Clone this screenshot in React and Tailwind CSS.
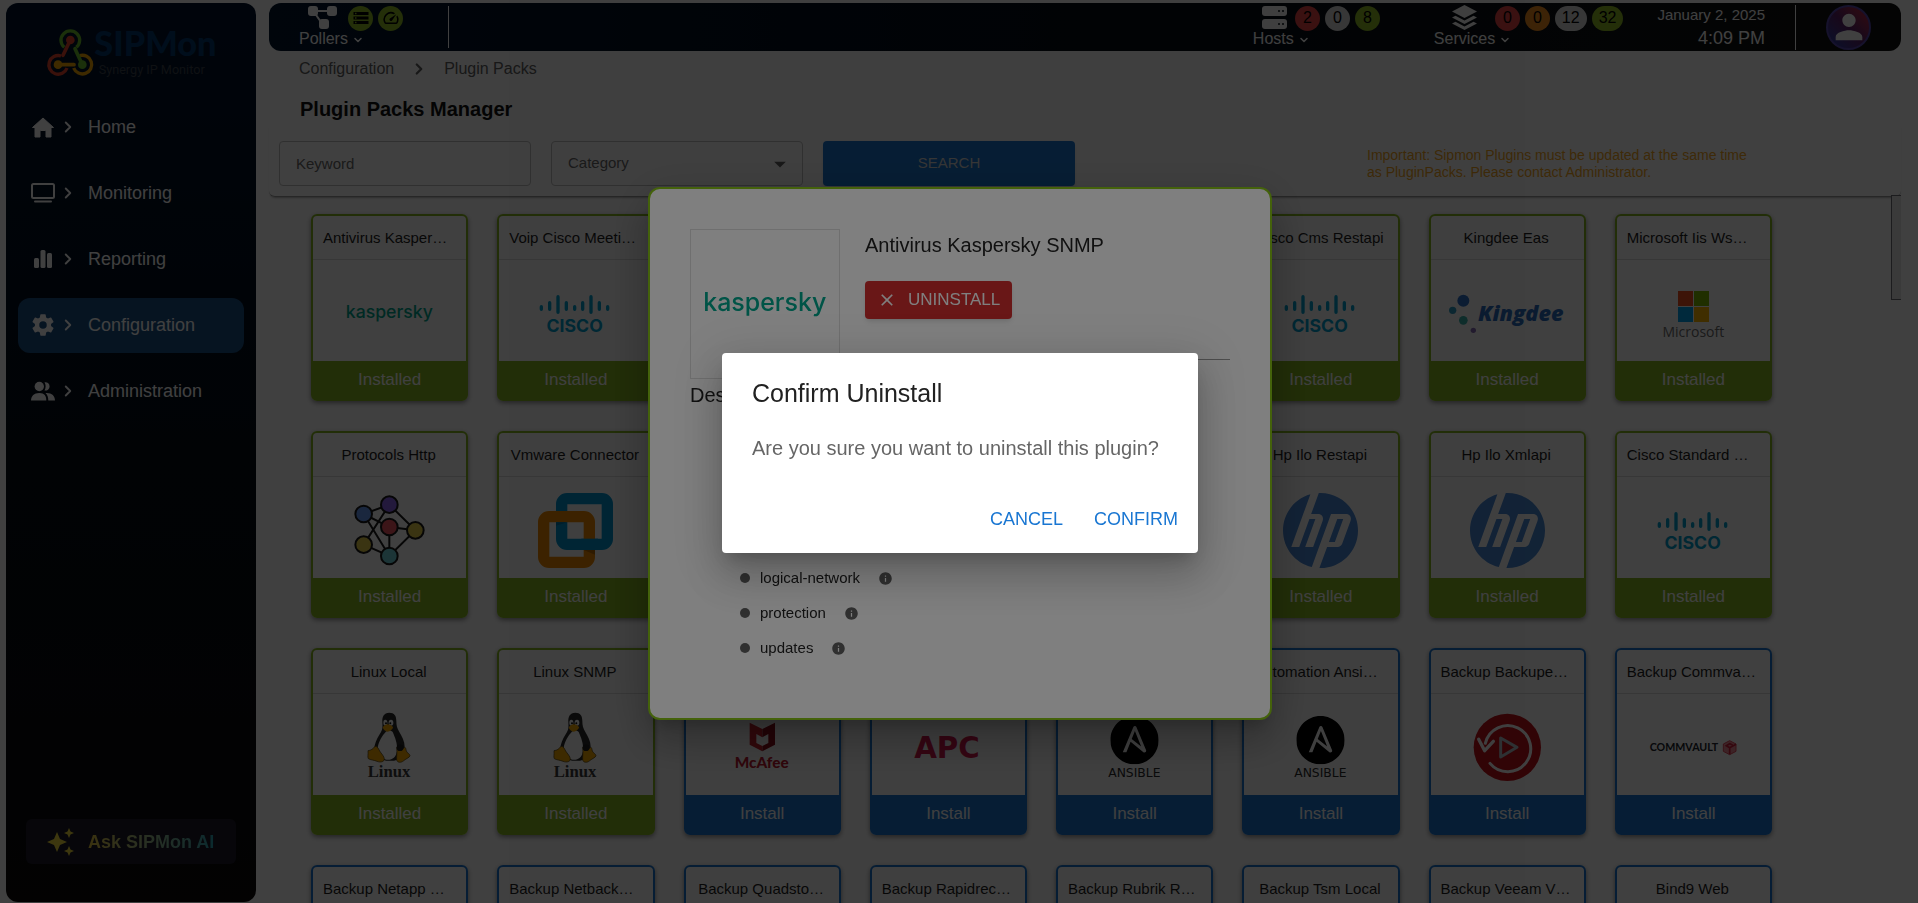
import { useState } from 'react';
import { SiAnsible, SiHp } from 'react-icons/si';
import {
  MdArrowDropDown,
  MdClose,
  MdInfo,
  MdPerson,
  MdSpeed,
  MdStorage,
} from 'react-icons/md';
import { IoSettingsSharp } from 'react-icons/io5';
import { ChevronDown, ChevronRight } from 'lucide-react';

/* ---------- Vendor logos ---------- */

function LogoFrame({ children, className = 'size-[75px]' }) {
  return (
    <svg
      viewBox="0 0 225 225"
      className={`overflow-visible ${className}`}
      aria-hidden="true"
    >
      {children}
    </svg>
  );
}

function Kaspersky({ className }) {
  return (
    <LogoFrame className={className}>
      <text
        x="112"
        y="127"
        textAnchor="middle"
        fontSize="53"
        fontWeight="500"
        fill="#00a88e"
        fontFamily="Inter, sans-serif"
      >
        kaspersky
      </text>
    </LogoFrame>
  );
}

function Cisco() {
  return (
    <LogoFrame>
      <path
        d="M10 92v8M35 80v20M60 62v47M85 80v20M110 92v8M134 80v20M159 62v47M184 80v20M209 92v8"
        stroke="#00a0d0"
        strokeWidth="10"
        strokeLinecap="round"
      />
      <text
        x="110"
        y="167"
        textAnchor="middle"
        fontSize="53"
        fontWeight="700"
        fill="#00a0d0"
        fontFamily="Inter, sans-serif"
      >
        CISCO
      </text>
    </LogoFrame>
  );
}

function Kingdee() {
  return (
    <LogoFrame>
      <circle cx="-20" cy="74" r="18" fill="#2f73c8" />
      <circle cx="-52" cy="103" r="11" fill="#2f9ec4" />
      <circle cx="-20" cy="133" r="13" fill="#3ab4ac" />
      <circle cx="10" cy="163" r="8" fill="#8a6fb8" />
      <text
        x="24"
        y="134"
        fontSize="65"
        fontWeight="800"
        fontStyle="italic"
        fill="#2b6cc0"
        fontFamily="'Open Sans', sans-serif"
      >
        Kingdee
      </text>
    </LogoFrame>
  );
}

function Microsoft() {
  return (
    <LogoFrame>
      <rect x="66" y="45" width="45" height="45" fill="#f25022" />
      <rect x="114" y="45" width="45" height="45" fill="#7fba00" />
      <rect x="66" y="93" width="45" height="45" fill="#00a4ef" />
      <rect x="114" y="93" width="45" height="45" fill="#ffb900" />
      <text
        x="112"
        y="182"
        textAnchor="middle"
        fontSize="42"
        fill="#6b6b6b"
        fontFamily="'Open Sans', sans-serif"
      >
        Microsoft
      </text>
    </LogoFrame>
  );
}

function HttpNodes() {
  return (
    <LogoFrame>
      <g stroke="#1a1a1a" strokeWidth="6" fill="none">
        <path d="M35 63 112 35 190 112 112 189 35 63 112 102 190 112M112 102V189L35 155 112 35" />
        <circle cx="35" cy="63" r="25" fill="#6a9cf5" />
        <circle cx="112" cy="35" r="25" fill="#8a66f0" />
        <circle cx="190" cy="112" r="25" fill="#e8cf4a" />
        <circle cx="112" cy="102" r="25" fill="#ee5560" />
        <circle cx="35" cy="155" r="25" fill="#e8cf4a" />
        <circle cx="112" cy="189" r="25" fill="#6fd3dc" />
      </g>
    </LogoFrame>
  );
}

function Vmware() {
  return (
    <LogoFrame>
      <rect
        x="71"
        y="17"
        width="137"
        height="137"
        rx="16"
        fill="none"
        stroke="#0095d3"
        strokeWidth="34"
      />
      <rect
        x="17"
        y="71"
        width="137"
        height="137"
        rx="16"
        fill="none"
        stroke="#f38b00"
        strokeWidth="34"
      />
      <path d="M130 137h50v34h-50z" fill="#0095d3" />
      <path d="M137 171h34v14z" fill="#b86a00" />
      <path d="M54 88h34l-34 10z" fill="#0078ac" />
    </LogoFrame>
  );
}

function Hp() {
  return (
    <LogoFrame>
      <SiHp size={225} color="#4a8ad8" />
    </LogoFrame>
  );
}

function Tux() {
  return (
    <LogoFrame>
      <path
        d="M112 8c-17 0-22 13-21 28 1 17 1 24-8 37-10 15-15 30-17 45l6 22 30 12h24l26-8 6-34c0-16-8-30-16-44-7-12-9-19-9-33 0-16-6-25-21-25z"
        fill="#2b2b2b"
      />
      <path
        d="M101 66c-10 10-22 30-24 48-1 14 6 22 14 29 6 5 12 7 22 6 14-2 20-12 22-25 2-24-6-42-13-58-6-6-15-6-21 0z"
        fill="#ffffff"
      />
      <ellipse cx="100" cy="38" rx="6" ry="9" fill="#ffffff" />
      <ellipse cx="117" cy="38" rx="7" ry="9" fill="#ffffff" />
      <circle cx="102" cy="40" r="3" fill="#111111" />
      <circle cx="115" cy="40" r="3" fill="#111111" />
      <path
        d="M92 52c5-5 9-9 15-9 7 0 12 4 16 8 1 6-10 14-16 14-7 0-13-6-15-13z"
        fill="#f5a800"
      />
      <path
        d="M48 122c9-1 15-5 21-13 7 0 10 6 14 14 5 8 14 16 14 24 0 9-12 11-22 7-9-4-20-4-26-8-3-5 0-12-1-24z"
        fill="#f5a800"
        stroke="#4a3a10"
        strokeWidth="2"
      />
      <path
        d="M134 112c5 10 16 10 24 0 3 0 4 6 5 11 2 6 10 8 11 14-1 6-14 10-20 16-7 6-18 5-20-3-1-10 2-20 0-38z"
        fill="#f5a800"
        stroke="#4a3a10"
        strokeWidth="2"
      />
      <circle cx="144" cy="113" r="10" fill="#1c1c1c" />
      <text
        x="111"
        y="202"
        textAnchor="middle"
        fontSize="50"
        fontWeight="700"
        fill="#383838"
        fontFamily="'Liberation Serif', serif"
      >
        Linux
      </text>
    </LogoFrame>
  );
}

function McAfee() {
  return (
    <LogoFrame>
      <path d="M74 38 112 57v25L94 72v27l18 9v16l-38-20z" fill="#c8202c" />
      <path d="M150 38 112 57v25l18-10v27l-18 9v16l38-20z" fill="#8e0c1a" />
      <text
        x="110"
        y="173"
        textAnchor="middle"
        fontSize="46"
        fontWeight="900"
        fill="#c01830"
        fontFamily="Lato, sans-serif"
      >
        McAfee
      </text>
    </LogoFrame>
  );
}

function Apc() {
  return (
    <LogoFrame>
      <text
        x="108"
        y="143"
        textAnchor="middle"
        fontSize="88"
        fontWeight="900"
        fill="#d4164c"
        fontFamily="'DejaVu Sans', sans-serif"
      >
        APC
      </text>
    </LogoFrame>
  );
}

function Ansible() {
  return (
    <LogoFrame>
      <SiAnsible x={40} y={18} size={145} color="#000000" />
      <text
        x="112"
        y="201"
        textAnchor="middle"
        fontSize="37"
        fill="#2b2b2b"
        fontFamily="'DejaVu Sans', sans-serif"
      >
        ANSIBLE
      </text>
    </LogoFrame>
  );
}

function BackupExec() {
  return (
    <LogoFrame>
      <circle cx="112" cy="112" r="101" fill="#c41018" />
      <path
        d="M46 100A69 69 0 1 1 60 160"
        fill="none"
        stroke="#ffffff"
        strokeWidth="9"
        strokeLinecap="round"
      />
      <path
        d="m26 88 18 34 26-28"
        fill="none"
        stroke="#ffffff"
        strokeWidth="10"
        strokeLinecap="round"
        strokeLinejoin="round"
      />
      <path
        d="M92 84v57l49-29z"
        fill="none"
        stroke="#b8c4cc"
        strokeWidth="9"
        strokeLinejoin="round"
      />
    </LogoFrame>
  );
}

function Commvault() {
  return (
    <LogoFrame>
      <text
        x="84"
        y="124"
        textAnchor="middle"
        fontSize="32"
        fontWeight="700"
        fill="#20242c"
        fontFamily="Lato, sans-serif"
      >
        COMMVAULT
      </text>
      <path
        d="m221 92 19 10v22l-19 10-19-10v-22z"
        fill="#f08a96"
        stroke="#e04a5c"
        strokeWidth="3"
      />
      <path
        d="m221 113 19-10M221 113v20M221 113l-10-6 10-6 9 4"
        fill="none"
        stroke="#d0203c"
        strokeWidth="5"
      />
    </LogoFrame>
  );
}

/* ---------- Data ---------- */

const plugins = [
  { name: 'Antivirus Kaspersky SNMP', Logo: Kaspersky, installed: true },
  { name: 'Voip Cisco Meeting Restapi', Logo: Cisco, installed: true },
  { name: 'Cisco Meraki', Logo: Cisco, installed: true },
  { name: 'Cisco Ise Restapi', Logo: Cisco, installed: true },
  { name: 'Cisco Esa Xmlapi', Logo: Cisco, installed: true },
  { name: 'Cisco Cms Restapi', Logo: Cisco, installed: true },
  { name: 'Kingdee Eas', Logo: Kingdee, installed: true },
  { name: 'Microsoft Iis Wsman', Logo: Microsoft, installed: true },
  { name: 'Protocols Http', Logo: HttpNodes, installed: true },
  { name: 'Vmware Connector', Logo: Vmware, installed: true },
  { name: 'Vmware Vcenter', Logo: Vmware, installed: true },
  { name: 'Hp Proliant', Logo: Hp, installed: true },
  { name: 'Hp Msa', Logo: Hp, installed: true },
  { name: 'Hp Ilo Restapi', Logo: Hp, installed: true },
  { name: 'Hp Ilo Xmlapi', Logo: Hp, installed: true },
  { name: 'Cisco Standard SNMP', Logo: Cisco, installed: true },
  { name: 'Linux Local', Logo: Tux, installed: true },
  { name: 'Linux SNMP', Logo: Tux, installed: true },
  { name: 'Antivirus Mcafee', Logo: McAfee, installed: false },
  { name: 'Apc Ups', Logo: Apc, installed: false },
  { name: 'Ansible Cli', Logo: Ansible, installed: false },
  { name: 'Automation Ansible Tower', Logo: Ansible, installed: false },
  { name: 'Backup Backupexec', Logo: BackupExec, installed: false },
  { name: 'Backup Commvault Commserve', Logo: Commvault, installed: false },
  { name: 'Backup Netapp Snapmanager', installed: false },
  { name: 'Backup Netbackup Nscp', installed: false },
  { name: 'Backup Quadsto…', installed: false },
  { name: 'Backup Rapidrecovery', installed: false },
  { name: 'Backup Rubrik Restapi', installed: false },
  { name: 'Backup Tsm Local', installed: false },
  { name: 'Backup Veeam Vbem', installed: false },
  { name: 'Bind9 Web', installed: false },
];

const menu = [
  { label: 'Home', Icon: HomeIcon },
  { label: 'Monitoring', Icon: MonitorIcon },
  { label: 'Reporting', Icon: BarsIcon },
  { label: 'Configuration', Icon: IoSettingsSharp, active: true },
  { label: 'Administration', Icon: PeopleIcon },
];

const discoveryRules = [
  'devices',
  'events',
  'logical-network',
  'protection',
  'updates',
];

/* ---------- Icons ---------- */

function HomeIcon({ className }) {
  return (
    <svg
      viewBox="0 0 24 24"
      className={className}
      fill="currentColor"
      stroke="currentColor"
      strokeLinejoin="round"
      aria-hidden="true"
    >
      <path d="m12 3 10.500 9.500H20V22h-5v-5.500a1 1 0 0 0-1-1h-4a1 1 0 0 0-1 1V22H4v-9.500H1.500z" />
    </svg>
  );
}

function PeopleIcon({ className }) {
  return (
    <svg
      viewBox="0 0 24 24"
      className={className}
      fill="currentColor"
      aria-hidden="true"
    >
      <circle cx="8.300" cy="7.500" r="4.700" />
      <path d="M0 21.500c0-4.500 3-7.500 8.300-7.500s7 3 7 7.500z" />
      <path d="M13.500 3.300a4.200 4.200 0 1 1 0 8.200c1.500-2.500 1.500-5.700 0-8.200z" />
      <path d="M14.500 14c6-.5 9.500 2.500 9.500 7.500h-6.700c0-3.200-.8-5.700-2.800-7.500z" />
    </svg>
  );
}

function MonitorIcon({ className }) {
  return (
    <svg viewBox="0 0 24 24" className={className} aria-hidden="true">
      <rect
        x="1"
        y="3"
        width="22"
        height="14"
        rx="1.5"
        fill="none"
        stroke="currentColor"
        strokeWidth="2"
      />
      <path
        d="M4 20.500h16"
        stroke="currentColor"
        strokeWidth="2"
        strokeLinecap="round"
      />
    </svg>
  );
}

function BarsIcon({ className }) {
  return (
    <svg
      viewBox="0 0 24 24"
      className={className}
      fill="currentColor"
      aria-hidden="true"
    >
      <rect x="3" y="11" width="5" height="10" rx="1.5" />
      <rect x="9.500" y="3" width="5" height="18" rx="1.5" />
      <rect x="16" y="6" width="5" height="15" rx="1.5" />
    </svg>
  );
}

function PollerIcon() {
  return (
    <svg viewBox="0 0 30 24" className="h-6 w-[30px]" aria-hidden="true">
      <path
        d="M8 5h14M6 6l9 13"
        stroke="currentColor"
        strokeWidth="2"
        fill="none"
      />
      <rect width="10" height="10" rx="3" fill="currentColor" />
      <rect x="19" width="10" height="10" rx="3" fill="currentColor" />
      <rect x="11" y="13" width="10" height="10" rx="3" fill="currentColor" />
    </svg>
  );
}

function ServerIcon() {
  return (
    <svg viewBox="0 0 25 24" className="h-6 w-[25px]" aria-hidden="true">
      <rect y="0" width="25" height="10" rx="3" fill="currentColor" />
      <rect y="13" width="25" height="10" rx="3" fill="currentColor" />
      <g fill="#0a1018">
        <circle cx="17" cy="5" r="1" />
        <circle cx="21" cy="5" r="1" />
        <circle cx="17" cy="18" r="1" />
        <circle cx="21" cy="18" r="1" />
      </g>
    </svg>
  );
}

function LayersIcon() {
  return (
    <svg
      viewBox="0 0 25 26"
      className="h-[26px] w-[25px]"
      fill="currentColor"
      aria-hidden="true"
    >
      <path d="m12.500 0 12.500 6.500-12.500 6.500L0 6.500z" />
      <path d="m0 12.500 3.500-1.800 9 4.700 9-4.700 3.500 1.800-12.500 6.500z" />
      <path d="m0 18.500 3.500-1.800 9 4.700 9-4.700 3.500 1.800L12.500 25z" />
    </svg>
  );
}

function SparkleIcon() {
  return (
    <svg
      viewBox="0 0 27 28"
      className="h-7 w-[27px]"
      fill="#f4dc3c"
      aria-hidden="true"
    >
      <path d="m10 4 3 7 7 3-7 3-3 7-3-7-7-3 7-3z" />
      <path d="m22 0 1.500 3.500L27 5l-3.500 1.500L22 10l-1.500-3.500L17 5l3.500-1.500z" />
      <path d="m22 18 1.500 3.500L27 23l-3.500 1.500L22 28l-1.500-3.500L17 23l3.500-1.500z" />
    </svg>
  );
}

function SipmonLogo() {
  return (
    <svg
      viewBox="0 0 510 150"
      className="h-[50px] w-[170px] overflow-visible"
      role="img"
    >
      <g fill="none" strokeWidth="10">
        <path d="M52 58A28 28 0 1 1 88 58" stroke="#6cbf2c" />
        <path d="M42 84A28 28 0 1 0 60 120" stroke="#e8452c" />
        <path d="M80 120A28 28 0 1 0 98 83" stroke="#f5a800" />
      </g>
      <g strokeWidth="11" strokeLinecap="round">
        <path d="M70 36 48 82" stroke="#e8452c" />
        <path d="M106 110 84 62" stroke="#6cbf2c" />
        <path d="M33 110h48" stroke="#f5a800" />
      </g>
      <circle cx="70" cy="36" r="13" fill="#e8452c" />
      <circle cx="106" cy="110" r="13" fill="#6cbf2c" />
      <circle cx="33" cy="110" r="13" fill="#f5a800" />
      <text
        x="142"
        y="83"
        fontSize="103"
        fontWeight="900"
        fill="#003a70"
        fontFamily="Lato, sans-serif"
      >
        SIPMon
      </text>
      <text
        x="155"
        y="137"
        fontSize="38"
        fill="#3c444e"
        fontFamily="Roboto, sans-serif"
      >
        Synergy IP Monitor
      </text>
    </svg>
  );
}

/* ---------- Layout ---------- */

function Sidebar() {
  return (
    <aside className="mt-[3px] mb-px ml-[6px] flex w-[250px] shrink-0 flex-col rounded-xl bg-linear-to-b from-[#00132e] via-[#040c16] to-[#0c0a0a] text-white">
      <div className="pt-[25px] pl-[41px]">
        <SipmonLogo />
      </div>
      <nav className="mt-[22px] flex flex-col gap-[11px] px-3">
        {menu.map(({ label, Icon, active }) => (
          <a
            key={label}
            href="#"
            className={`flex h-[55px] items-center rounded-xl pb-px pl-[13px] text-lg ${
              active ? 'bg-[#1b5084]' : ''
            }`}
          >
            <Icon className="size-6" />
            <ChevronRight className="ml-1 size-[18px]" strokeWidth={2.5} />
            <span className="ml-[11px]">{label}</span>
          </a>
        ))}
      </nav>
      <button
        type="button"
        className="mx-5 mt-auto mb-[38px] flex h-[45px] items-center gap-[14px] rounded-md bg-[#1c1a2a] pl-[21px] text-lg font-bold"
      >
        <SparkleIcon />
        <span className="bg-linear-to-r from-[#e8c83c] to-[#28a8b8] bg-clip-text text-transparent">
          Ask SIPMon AI
        </span>
      </button>
    </aside>
  );
}

function Badge({ className, children }) {
  return (
    <span
      className={`flex h-[25px] min-w-[25px] items-center justify-center rounded-full text-base text-black ${className}`}
    >
      {children}
    </span>
  );
}

function StatusGroup({ label, icon, iconClass = 'gap-2 pl-[9px]', children }) {
  return (
    <div className="flex flex-col pb-[2px]">
      <div className={`flex h-[25px] items-center ${iconClass}`}>
        {icon}
        <div className="flex gap-[5px]">{children}</div>
      </div>
      <button
        type="button"
        className="flex items-center gap-1 text-base leading-4"
      >
        {label}
        <ChevronDown className="mt-[2px] size-3" strokeWidth={3} />
      </button>
    </div>
  );
}

function TopBar() {
  return (
    <header className="flex h-12 shrink-0 items-center rounded-xl bg-linear-to-r from-[#00142e] via-[#040c16] to-[#121212] pl-[30px] text-white">
      <StatusGroup
        label="Pollers"
        icon={<PollerIcon />}
        iconClass="gap-[10px] pl-[9px]"
      >
        <Badge className="bg-[#90bc26]">
          <MdStorage className="size-[18px]" />
        </Badge>
        <Badge className="bg-[#90bc26]">
          <MdSpeed className="size-[18px]" />
        </Badge>
      </StatusGroup>
      <div className="ml-[45px] h-[42px] w-px bg-white" />

      <div className="ml-auto flex items-center gap-[54px]">
        <StatusGroup label="Hosts" icon={<ServerIcon />}>
          <Badge className="bg-[#e84545]">2</Badge>
          <Badge className="bg-[#dcdcdc]">0</Badge>
          <Badge className="bg-[#90bc26]">8</Badge>
        </StatusGroup>
        <StatusGroup
          label="Services"
          icon={<LayersIcon />}
          iconClass="gap-[18px] pl-[18px]"
        >
          <Badge className="bg-[#e84545]">0</Badge>
          <Badge className="bg-[#f08c1e]">0</Badge>
          <Badge className="bg-[#dcdcdc] px-[7px]">12</Badge>
          <Badge className="bg-[#90bc26] px-[7px]">32</Badge>
        </StatusGroup>
      </div>
      <div className="ml-[34px] text-right">
        <p className="text-[15px] leading-[22px]">January 2, 2025</p>
        <p className="text-lg leading-6">4:09 PM</p>
      </div>
      <div className="ml-[30px] h-[45px] w-px bg-white" />
      <button
        type="button"
        aria-label="Profile"
        className="mx-[30px] flex size-[45px] items-center justify-center rounded-full border-2 border-[#5848b0] bg-linear-to-bl from-[#d01c34] via-[#5c2068] to-[#1040b0]"
      >
        <MdPerson className="size-10" />
      </button>
    </header>
  );
}

function Filters() {
  return (
    <form
      className="flex justify-between rounded-b-md border-b border-[#9a9a9a] pt-4 pb-[10px] pl-[10px] shadow-[0_2px_2px_-1px_rgba(0,0,0,0.3)]"
      onSubmit={(e) => e.preventDefault()}
    >
      <div className="flex gap-5">
        <input
          type="text"
          aria-label="Keyword"
          placeholder="Keyword"
          className="h-[45px] w-[252px] rounded border border-[#c0c0c0] px-4 text-[15px] placeholder:text-[#6a6a6a]"
        />
        <div className="relative">
          <select
            aria-label="Category"
            className="h-[45px] w-[252px] appearance-none rounded border border-[#c0c0c0] px-4 text-[15px] text-[#6a6a6a]"
          >
            <option>Category</option>
          </select>
          <MdArrowDropDown className="pointer-events-none absolute top-[9px] right-[9px] size-7 text-[#606060]" />
        </div>
        <button
          type="submit"
          className="h-[45px] w-[252px] rounded bg-[#1976d2] text-[15px] text-[#d8d8d8] uppercase shadow-md"
        >
          Search
        </button>
      </div>
      <p className="mt-[6px] mr-[154px] w-[380px] text-sm leading-[17px] text-[#f5a623]">
        Important: Sipmon Plugins must be updated at the same time as
        PluginPacks. Please contact Administrator.
      </p>
    </form>
  );
}

function PluginCard({ name, Logo, installed }) {
  return (
    <article
      className={`flex min-w-0 flex-col rounded-md border-2 shadow-[0_2px_5px_rgba(0,0,0,0.45)] ${
        installed ? 'border-[#88b820]' : 'border-[#1976d2]'
      }`}
    >
      <h2 className="truncate border-b border-[#dcdcdc] pr-3 pl-[10px] text-center text-[15px] leading-[43px] text-[#1e1e1e]">
        {name}
      </h2>
      <div className="flex h-[101px] justify-center pt-4">
        {Logo && <Logo />}
      </div>
      <button
        type="button"
        className={`h-[38px] text-[17px] text-white ${
          installed ? 'bg-[#88b820]' : 'bg-[#1976d2]'
        }`}
      >
        {installed ? 'Installed' : 'Install'}
      </button>
    </article>
  );
}

function PluginDetails() {
  return (
    <section
      role="dialog"
      aria-label="Antivirus Kaspersky SNMP"
      className="w-[624px] rounded-xl border-2 border-[#88c417] bg-white px-10 pt-10 pb-[52px] text-[#222222] shadow-[0_11px_15px_-7px_rgba(0,0,0,0.2),0_24px_38px_3px_rgba(0,0,0,0.14),0_9px_46px_8px_rgba(0,0,0,0.12)]"
    >
      <div className="flex gap-[25px]">
        <div className="flex size-[150px] items-center justify-center border border-[#dedede]">
          <Kaspersky className="size-[106px]" />
        </div>
        <div className="flex-1">
          <h2 className="text-xl leading-8">Antivirus Kaspersky SNMP</h2>
          <button
            type="button"
            className="mt-5 flex h-[38px] items-center gap-[11px] rounded bg-[#d32f2f] px-3 text-[17px] text-white uppercase shadow-md"
          >
            <MdClose className="size-5" />
            Uninstall
          </button>
          <hr className="mt-10 border-[#9a9a9a]" />
        </div>
      </div>
      <h3 className="text-xl leading-8">Description</h3>
      <div className="pl-[50px]">
        <p className="mt-4 text-[15px] leading-6">Monitor Kaspersky.</p>
        <h4 className="mt-3 text-base leading-7">Discovery rules</h4>
        <ul className="text-[15px]">
          {discoveryRules.map((rule) => (
            <li key={rule} className="flex h-[35px] items-center">
              <span className="size-[10px] rounded-full bg-[#606060]" />
              <span className="ml-[10px]">{rule}</span>
              <MdInfo className="ml-[18px] size-[15px] text-[#606060]" />
            </li>
          ))}
        </ul>
      </div>
    </section>
  );
}

function ConfirmDialog({ onClose }) {
  return (
    <section
      role="dialog"
      aria-labelledby="confirm-title"
      className="w-[476px] rounded bg-white px-[30px] pt-6 pb-[17px] shadow-[0_11px_15px_-7px_rgba(0,0,0,0.2),0_24px_38px_3px_rgba(0,0,0,0.14),0_9px_46px_8px_rgba(0,0,0,0.12)]"
    >
      <h2 id="confirm-title" className="text-[25px] leading-8 text-[#212121]">
        Confirm Uninstall
      </h2>
      <p className="mt-6 text-xl leading-[30px] whitespace-nowrap text-[#666666]">
        Are you sure you want to uninstall this plugin?
      </p>
      <div className="mt-[39px] -mr-5 flex justify-end gap-[11px] text-lg text-[#1976d2]">
        <button type="button" className="h-[34px] px-[10px]" onClick={onClose}>
          CANCEL
        </button>
        <button type="button" className="h-[34px] px-[10px]" onClick={onClose}>
          CONFIRM
        </button>
      </div>
    </section>
  );
}

function Overlay({ children }) {
  return (
    <div className="fixed inset-0 flex items-center justify-center bg-black/50 pt-[3px] pl-[2px]">
      {children}
    </div>
  );
}

export default function App() {
  const [confirmOpen, setConfirmOpen] = useState(true);

  return (
    <div className="flex h-screen overflow-hidden bg-white font-['Liberation_Sans',Arial,sans-serif]">
      <Sidebar />
      <main className="mt-[3px] mr-[17px] ml-[13px] flex min-w-0 flex-1 flex-col">
        <TopBar />

        {/* Breadcrumb */}
        <nav className="flex items-center gap-4 pl-[30px] text-base leading-9 text-[#606060]">
          <a href="#">Configuration</a>
          <ChevronRight className="size-[18px]" strokeWidth={3} />
          <a href="#">Plugin Packs</a>
        </nav>
        <h1 className="mt-[6px] pl-[31px] text-xl leading-8 font-bold text-[#111111]">
          Plugin Packs Manager
        </h1>

        <Filters />

        {/* Plugin list */}
        <div className="-mt-[2px] flex min-h-0 flex-1 items-start overflow-hidden">
          <div className="grid flex-1 grid-cols-8 gap-x-[29px] gap-y-[30px] pt-[19px] pr-[119px] pl-[42px]">
            {plugins.map((plugin) => (
              <PluginCard key={plugin.name} {...plugin} />
            ))}
          </div>
          <div className="h-[105px] w-[10px] border-y border-l border-[#707078] bg-[#e8e8e8]" />
        </div>
      </main>

      {/* Plugin details */}
      <Overlay>
        <PluginDetails />
      </Overlay>

      {/* Uninstall confirmation */}
      {confirmOpen && (
        <Overlay>
          <ConfirmDialog onClose={() => setConfirmOpen(false)} />
        </Overlay>
      )}
    </div>
  );
}
